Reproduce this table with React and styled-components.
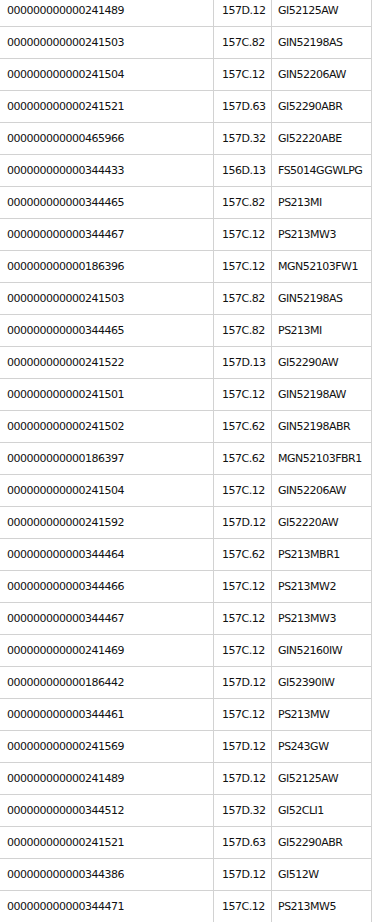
import styled, { createGlobalStyle } from "styled-components"

const GlobalStyle = createGlobalStyle`
  body {
    margin: 0;
    background: #ffffff;
    overflow: hidden;
  }
`

const rows = [
  ["000000000000241489", "157D.12", "GI52125AW"],
  ["000000000000241503", "157C.82", "GIN52198AS"],
  ["000000000000241504", "157C.12", "GIN52206AW"],
  ["000000000000241521", "157D.63", "GI52290ABR"],
  ["000000000000465966", "157D.32", "GI52220ABE"],
  ["000000000000344433", "156D.13", "FS5014GGWLPG"],
  ["000000000000344465", "157C.82", "PS213MI"],
  ["000000000000344467", "157C.12", "PS213MW3"],
  ["000000000000186396", "157C.12", "MGN52103FW1"],
  ["000000000000241503", "157C.82", "GIN52198AS"],
  ["000000000000344465", "157C.82", "PS213MI"],
  ["000000000000241522", "157D.13", "GI52290AW"],
  ["000000000000241501", "157C.12", "GIN52198AW"],
  ["000000000000241502", "157C.62", "GIN52198ABR"],
  ["000000000000186397", "157C.62", "MGN52103FBR1"],
  ["000000000000241504", "157C.12", "GIN52206AW"],
  ["000000000000241592", "157D.12", "GI52220AW"],
  ["000000000000344464", "157C.62", "PS213MBR1"],
  ["000000000000344466", "157C.12", "PS213MW2"],
  ["000000000000344467", "157C.12", "PS213MW3"],
  ["000000000000241469", "157C.12", "GIN52160IW"],
  ["000000000000186442", "157D.12", "GI52390IW"],
  ["000000000000344461", "157C.12", "PS213MW"],
  ["000000000000241569", "157D.12", "PS243GW"],
  ["000000000000241489", "157D.12", "GI52125AW"],
  ["000000000000344512", "157D.32", "GI52CLI1"],
  ["000000000000241521", "157D.63", "GI52290ABR"],
  ["000000000000344386", "157D.12", "GI512W"],
  ["000000000000344471", "157C.12", "PS213MW5"],
]

const Grid = styled.div`
  margin-top: -5px;
  width: 372px;
  font-family: "DejaVu Sans", "Liberation Sans", sans-serif;
  font-size: 11px;
  letter-spacing: -0.5px;
  color: #111111;
`

const Row = styled.div`
  display: grid;
  grid-template-columns: 214px 58px 100px;
  height: 32px;
  box-sizing: border-box;
  border-bottom: 1px solid #d2d2d2;
`

const Cell = styled.div`
  display: flex;
  align-items: center;
  box-sizing: border-box;
  padding-left: ${(p) => p.$pad}px;
  border-right: 1px solid #d2d2d2;
  white-space: nowrap;
  overflow: hidden;
`

const App = () => {
  return (
    <>
      <GlobalStyle />
      <Grid>
        {rows.map((r, i) => (
          <Row key={i}>
            <Cell $pad={7}>{r[0]}</Cell>
            <Cell $pad={8}>{r[1]}</Cell>
            <Cell $pad={6}>{r[2]}</Cell>
          </Row>
        ))}
      </Grid>
    </>
  )
}

export default App
